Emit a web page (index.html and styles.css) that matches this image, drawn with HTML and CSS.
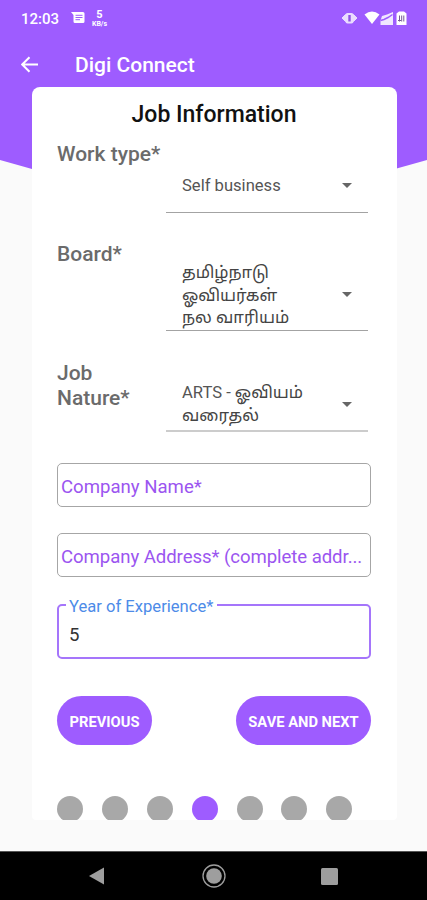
FILE: index.html
```html
<!DOCTYPE html>
<html lang="en">
<head>
<meta charset="utf-8">
<title>Digi Connect</title>
<link rel="stylesheet" href="styles.css">
</head>
<body>
<div class="screen">
  <svg class="backdrop" viewBox="0 0 427 220" aria-hidden="true"><path d="M0 0H427V160L213.500 220L0 160Z" fill="#9e5cff"/></svg>
  <header class="status">
    <span class="clock"><span class="t">12:03</span></span>
    <svg class="msg" width="14" height="12" viewBox="0 0 14 12"><path d="M0 0H12Q13.500 0 13.500 1.500V9.500Q13.500 11 12 11H4Q2.500 11 2.500 9.500V3Z" fill="#fff"/><path d="M4.500 3.300H11.500M4.500 5.500H11.500M4.500 7.700H9" stroke="#9e5cff" stroke-width="1"/></svg>
    <span class="speed"><b>5</b><i>KB/s</i></span>
    <svg class="sys" width="66" height="16" viewBox="0 0 66 16">
      <path d="M1 8L4.500 4.500V11.500ZM16 8L12.500 4.500V11.500Z" fill="#eadcff" stroke="#eadcff"/>
      <rect x="4.500" y="3" width="8" height="10.500" rx="2" fill="#eadcff"/><rect x="7.300" y="5" width="2.400" height="6.500" fill="#8d50e4"/>
      <path d="M23.500 4.500Q31 -1.500 38.500 4.500L31 14Z" fill="#fff"/>
      <path d="M52 2V15H39.500V10.500L41 6L46 4.500Z" fill="#f0e6ff"/><path d="M39.500 10.500L43 9.500L47 7.500L51.500 4.500" stroke="#9e5cff" stroke-width="1.500" fill="none"/>
      <path d="M55.500 3.500L58 1.500H63L65.500 3.500V15H55.500Z" fill="#fff"/><path d="M58.500 5.500V11.500M60.700 5.500V11.500M62.800 5.500V11.500M57 10.500H60" stroke="#765996" stroke-width="1"/>
    </svg>
  </header>
  <nav class="appbar">
    <svg width="18" height="17" viewBox="0 0 18 17"><path d="M17 8.500H1.500M8.500 1.200L1.200 8.500L8.500 15.800" fill="none" stroke="#fff" stroke-width="2"/></svg>
    <span class="apptitle"><span class="t">Digi Connect</span></span>
  </nav>
  <main class="card">
    <h1><span class="t">Job Information</span></h1>
    <section class="row work">
      <div class="label">Work type*</div>
      <div class="select"><span class="value latin">Self business</span><span class="arrow"></span></div>
    </section>
    <section class="row board">
      <div class="label">Board*</div>
      <div class="select"><span class="value" lang="ta">தமிழ்நாடு<br>ஓவியர்கள்<br>நல வாரியம்</span><span class="arrow"></span></div>
    </section>
    <section class="row nature">
      <div class="label">Job<br>Nature*</div>
      <div class="select"><span class="value" lang="ta"><span class="latin">ARTS - </span>ஓவியம்<br>வரைதல்</span><span class="arrow"></span></div>
    </section>
    <div class="field name"><span>Company Name*</span></div>
    <div class="field address"><span>Company Address* (complete addr...</span></div>
    <div class="field years"><span class="years-value">5</span><span class="float">Year of Experience*</span></div>
    <div class="actions"><div class="button prev"><span>PREVIOUS</span></div><div class="button next"><span>SAVE AND NEXT</span></div></div>
    <div class="dots"><i></i><i></i><i></i><i class="on"></i><i></i><i></i><i></i></div>
  </main>
  <footer class="navbar">
    <svg width="15" height="18" viewBox="0 0 15 18"><path d="M15 .500V17.500L0 9Z" fill="#9e9e9e"/></svg>
    <svg class="home" width="24" height="24" viewBox="0 0 24 24"><circle cx="12" cy="12" r="11" fill="none" stroke="#9e9e9e" stroke-width="1.300"/><circle cx="12" cy="12" r="7.800" fill="#9e9e9e"/></svg>
    <svg width="17" height="17" viewBox="0 0 17 17"><rect width="17" height="17" rx="1.500" fill="#9e9e9e"/></svg>
  </footer>
</div>
</body>
</html>
```
FILE: styles.css
```css
* { box-sizing: border-box; }
body { margin: 0; font-family: Roboto, "Noto Sans Tamil", "Noto Sans", sans-serif; }
.screen { position: relative; width: 427px; height: 900px; background: #fafafa; display: flex; flex-direction: column; overflow: hidden; }
.backdrop { position: absolute; top: 0; left: 0; width: 427px; height: 220px; }
.status, .appbar, .card, .navbar { position: relative; }
.status { height: 37px; padding-left: 21px; display: flex; align-items: center; color: #fff; }
.clock { width: 50px; font-size: 15px; font-weight: 500; line-height: 37px; padding-top: 1px; }
.msg { margin-top: -1px; }
.speed { width: 17px; margin-left: 6px; display: flex; flex-direction: column; align-items: center; }
.speed b { font-size: 11px; line-height: 10px; font-weight: 700; }
.speed i { font-size: 7px; line-height: 8px; font-style: normal; font-weight: 700; }
.sys { margin-left: auto; margin-right: 20px; margin-top: -1px; }
.appbar { height: 50px; padding: 5px 0 0 21px; display: flex; align-items: center; color: #fff; }
.appbar svg { margin-top: -1px; }
.apptitle { margin-left: 36px; font-size: 21px; font-weight: 500; line-height: 30px; padding-top: 1px; }
.card { width: 365px; height: 733px; margin-left: 32px; padding: 0 26px 0 25px; background: #fff; border-radius: 8px 8px 4px 4px; overflow: hidden; flex: none; display: flex; flex-direction: column; }
h1 { margin: 0; height: 55px; line-height: 55px; font-size: 23px; font-weight: 500; color: #111; text-align: center; }
.row { display: flex; flex: none; }
.label { width: 109px; font-size: 21px; line-height: 24.500px; font-weight: 500; color: #6b6b6b; white-space: nowrap; }
.select { width: 202px; padding-left: 16px; border-bottom: 1.500px solid #a3a3a3; display: flex; justify-content: space-between; }
.value { font-size: 16.600px; line-height: 22.500px; color: #444; white-space: nowrap; }
.latin { color: #555; }
.arrow { width: 10px; height: 5px; margin-right: 16px; background: #666; clip-path: polygon(0 0, 100% 0, 50% 100%); }
.work { height: 71px; margin-bottom: 29px; }
.work .value { margin-top: 33px; }
.work .arrow { margin-top: 41px; }
.board { height: 89px; margin-bottom: 30px; }
.board .value { margin-top: 20px; }
.board .arrow { margin-top: 50px; }
.nature { height: 71px; margin-bottom: 31px; }
.nature .value { margin-top: 21px; }
.nature .arrow { margin-top: 41px; }
.nature .select { border-bottom: 2px solid #ccc; }
.field { position: relative; flex: none; border: 1.500px solid #a6a6a6; border-radius: 5px; color: #9b55f0; font-size: 18.600px; padding-left: 3px; white-space: nowrap; }
.name { height: 44px; line-height: 47px; margin-bottom: 26px; }
.address { height: 44px; line-height: 47px; margin-bottom: 27px; letter-spacing: -0.070px; }
.years { height: 55px; border: 2px solid #a575fb; padding: 0 0 0 10px; line-height: 59px; color: #333; }
.float { position: absolute; left: 7px; top: -9px; padding: 0 4px 0 3px; background: #fff; color: #4d8be8; font-size: 16.600px; line-height: 20px; }
.actions { margin-top: 37px; height: 49px; flex: none; display: flex; justify-content: space-between; }
.button { border-radius: 25px; background: #9e5cff; color: #fff; font-size: 14.700px; font-weight: 700; line-height: 52px; text-align: center; white-space: nowrap; }
.prev { width: 95px; }
.next { width: 135px; }
.dots { margin-top: 50.500px; display: flex; gap: 18.900px; flex: none; }
.dots i { width: 26px; height: 26px; border-radius: 50%; background: #a8a8a8; }
.dots .on { background: #9e5cff; }
.navbar { height: 49px; margin-top: auto; background: #000; border-top: 1px solid #555; padding: 0 89px; display: flex; align-items: center; justify-content: space-between; }
.home { margin-left: 2px; }
```
